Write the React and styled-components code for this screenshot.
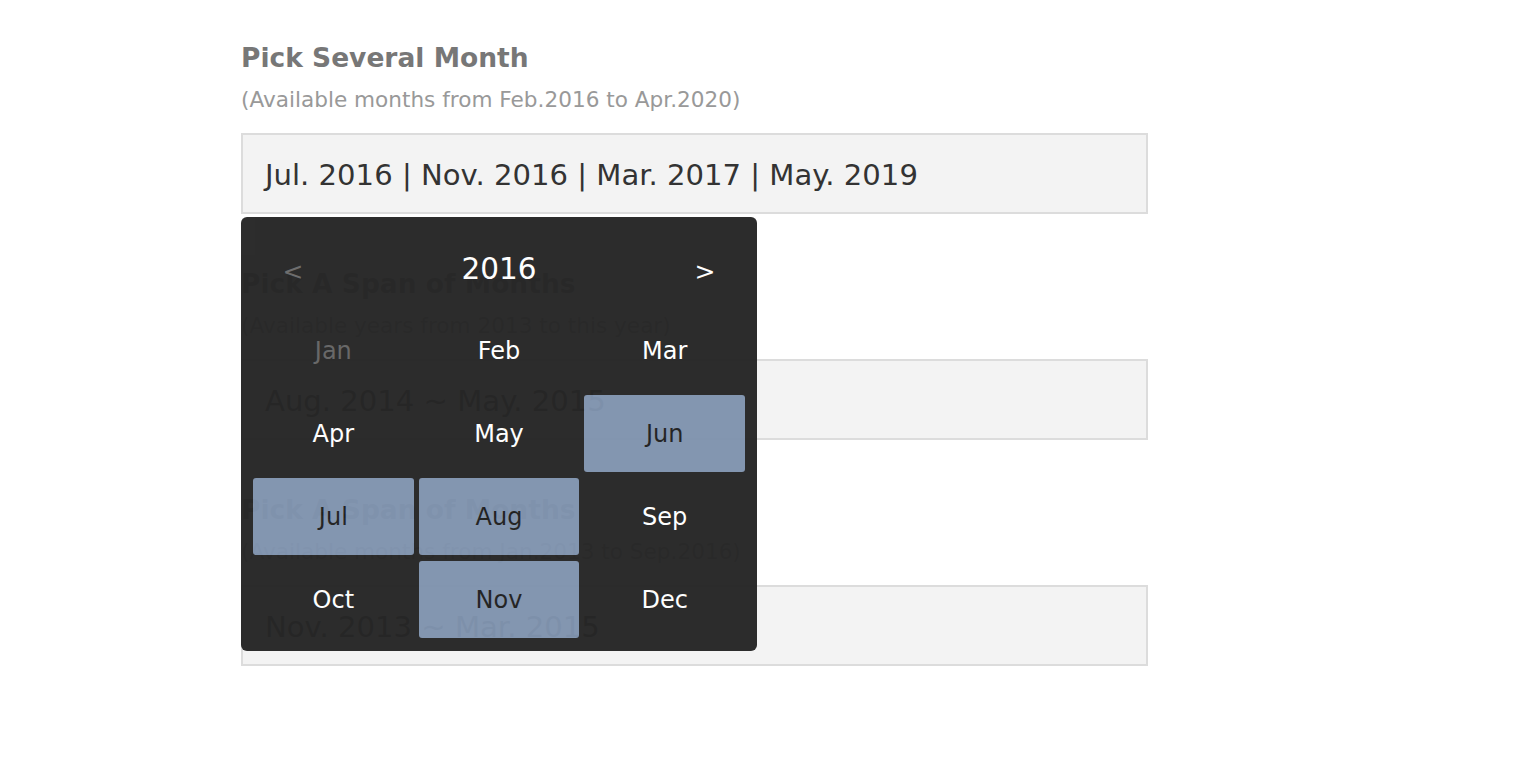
import React from 'react'
import styled, { createGlobalStyle } from 'styled-components'

const GlobalStyle = createGlobalStyle`
  html, body {
    margin: 0;
    padding: 0;
    background: #fff;
  }
  body {
    font-family: "DejaVu Sans", Verdana, sans-serif;
  }
`

const Page = styled.div`
  padding: 41px 0 0 241px;
  width: 907px;
`

const Section = styled.section`
  position: relative;
  margin-bottom: 53px;
`

const Title = styled.h2`
  margin: 0 0 11px;
  font-size: 26.5px;
  line-height: 34px;
  font-weight: bold;
  color: #777;
`

const Hint = styled.p`
  margin: 0 0 19px;
  font-size: 21.6px;
  line-height: 28px;
  color: #999;
`

const Field = styled.div`
  box-sizing: border-box;
  height: 81px;
  display: flex;
  align-items: center;
  padding: 2px 22px 0;
  background: #f3f3f3;
  border: 2px solid #dcdcdc;
  font-size: 29.1px;
  color: #333;
  white-space: nowrap;
`

const Popup = styled.div`
  position: absolute;
  left: 0;
  top: calc(100% + 3px);
  width: 516px;
  box-sizing: border-box;
  padding: 12px 12px 13px;
  background: #262626;
  border-radius: 6px;
  opacity: 0.97;
  z-index: 10;
`

const Head = styled.div`
  height: 80px;
  margin-bottom: 3px;
  display: flex;
  align-items: center;
  justify-content: space-between;
`

const Arrow = styled.span`
  width: 80px;
  text-align: center;
  font-size: 25px;
  padding-top: 4px;
  color: ${p => (p.$off ? '#6a6a6a' : '#fff')};
`

const Year = styled.span`
  font-size: 29.5px;
  color: #fff;
`

const Grid = styled.div`
  display: grid;
  grid-template-columns: repeat(3, 1fr);
  grid-auto-rows: 77px;
  column-gap: 5px;
  row-gap: 6px;
`

const Cell = styled.div`
  display: flex;
  align-items: center;
  justify-content: center;
  border-radius: 3px;
  font-size: 24px;
  background: ${p => (p.$on ? '#8093ae' : 'transparent')};
  color: ${p => (p.$on ? '#1e1e1e' : p.$off ? '#646464' : '#fff')};
`

const months = ['Jan', 'Feb', 'Mar', 'Apr', 'May', 'Jun', 'Jul', 'Aug', 'Sep', 'Oct', 'Nov', 'Dec']
const picked = ['Jun', 'Jul', 'Aug', 'Nov']

const MonthBox = () => (
  <Popup>
    <Head>
      <Arrow $off>&lt;</Arrow>
      <Year>2016</Year>
      <Arrow>&gt;</Arrow>
    </Head>
    <Grid>
      {months.map(m => (
        <Cell key={m} $on={picked.includes(m)} $off={m === 'Jan'}>
          {m}
        </Cell>
      ))}
    </Grid>
  </Popup>
)

export default function App() {
  return (
    <>
      <GlobalStyle />
      <Page>
        <Section>
          <Title>Pick Several Month</Title>
          <Hint>(Available months from Feb.2016 to Apr.2020)</Hint>
          <Field>Jul. 2016 | Nov. 2016 | Mar. 2017 | May. 2019</Field>
          <MonthBox />
        </Section>
        <Section>
          <Title>Pick A Span of Months</Title>
          <Hint>(Available years from 2013 to this year)</Hint>
          <Field>Aug. 2014 ~ May. 2015</Field>
        </Section>
        <Section>
          <Title>Pick A Span of Months</Title>
          <Hint>(Available months from Jan.2013 to Sep.2016)</Hint>
          <Field>Nov. 2013 ~ Mar. 2015</Field>
        </Section>
      </Page>
    </>
  )
}
